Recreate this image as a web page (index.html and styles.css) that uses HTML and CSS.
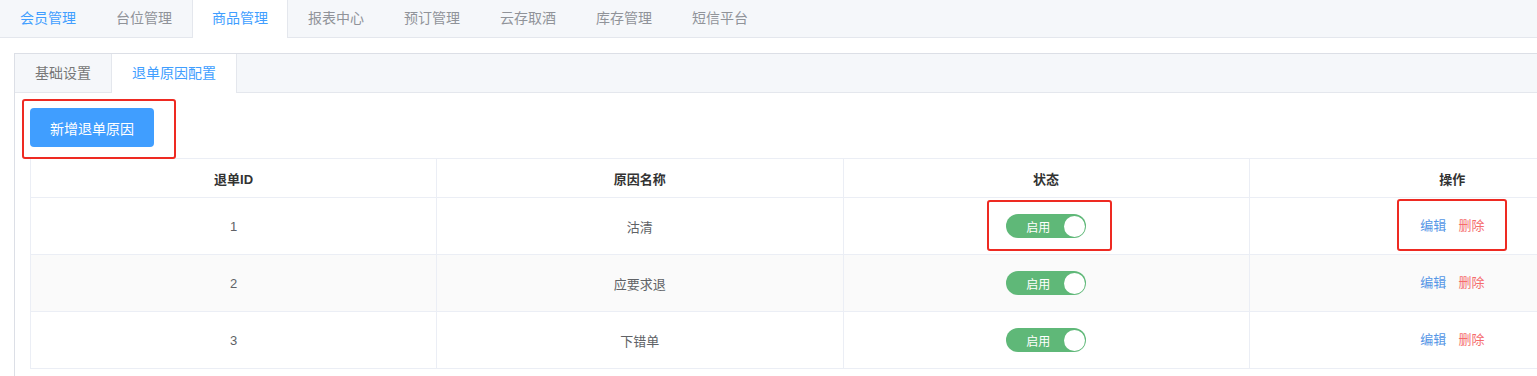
FILE: index.html
```html
<!DOCTYPE html>
<html lang="zh-CN">
<head>
  <meta charset="utf-8" />
  <title>商品管理</title>
  <link rel="stylesheet" href="styles.css">
</head>
<body>
  <!-- 顶部模块切换 -->
  <div class="top-tabs">
    <span class="top-tab link">会员管理</span>
    <span class="top-tab">台位管理</span>
    <span class="top-tab active">商品管理</span>
    <span class="top-tab">报表中心</span>
    <span class="top-tab">预订管理</span>
    <span class="top-tab">云存取酒</span>
    <span class="top-tab">库存管理</span>
    <span class="top-tab">短信平台</span>
  </div>

  <div class="panel">
    <div class="sub-tabs">
      <span class="sub-tab">基础设置</span>
      <span class="sub-tab active">退单原因配置</span>
    </div>

    <div class="panel-body">
      <div class="toolbar">
        <button class="btn-primary mark mark-btn">新增退单原因</button>
      </div>

      <table class="grid">
        <thead>
          <tr>
            <th>退单ID</th>
            <th>原因名称</th>
            <th>状态</th>
            <th>操作</th>
          </tr>
        </thead>
        <tbody>
          <tr>
            <td>1</td>
            <td>沽清</td>
            <td><span class="switch mark mark-switch"><span class="switch-text">启用</span><span class="knob"></span></span></td>
            <td><span class="actions mark mark-actions"><a class="edit">编辑</a><a class="del">删除</a></span></td>
          </tr>
          <tr>
            <td>2</td>
            <td>应要求退</td>
            <td><span class="switch"><span class="switch-text">启用</span><span class="knob"></span></span></td>
            <td><span class="actions"><a class="edit">编辑</a><a class="del">删除</a></span></td>
          </tr>
          <tr>
            <td>3</td>
            <td>下错单</td>
            <td><span class="switch"><span class="switch-text">启用</span><span class="knob"></span></span></td>
            <td><span class="actions"><a class="edit">编辑</a><a class="del">删除</a></span></td>
          </tr>
        </tbody>
      </table>
    </div>
  </div>
</body>
</html>
```

FILE: styles.css
```css
html, body {
  overflow: hidden;
}
body {
  margin: 0;
  padding: 0;
  font-family: "Liberation Sans", "Noto Sans CJK SC", sans-serif;
  font-size: 14px;
  color: #606266;
  background: #fff;
}
/* 顶部模块 tab */
.top-tabs {
  display: flex;
  height: 37px;
  background: #f5f7fa;
  border-bottom: 1px solid #e4e7ed;
}
.top-tab {
  width: 96px;
  box-sizing: border-box;
  text-align: center;
  line-height: 37px;
  color: #909399;
}
.top-tab.link {
  color: #409eff;
}
.top-tab.active {
  color: #409eff;
  background: #fff;
  border-left: 1px solid #e4e7ed;
  border-right: 1px solid #e4e7ed;
  height: 38px;
}
/* 内容面板 */
.panel {
  margin: 15px 0 0 14px;
  width: 1656px;
  border: 1px solid #dcdfe6;
  border-right: 0;
}
.sub-tabs {
  display: flex;
  height: 38px;
  background: #f5f7fa;
  border-bottom: 1px solid #e4e7ed;
}
.sub-tab {
  padding: 0 20px;
  line-height: 38px;
  color: #777;
  border-right: 1px solid #e4e7ed;
}
.sub-tab.active {
  color: #409eff;
  background: #fff;
  height: 39px;
}
.panel-body {
  padding: 15px 0 20px 15px;
}
.toolbar {
  margin-bottom: 10px;
  height: 40px;
}
.btn-primary {
  width: 124px;
  height: 39px;
  border: 0;
  border-radius: 4px;
  background: #409eff;
  color: #fff;
  font-family: inherit;
  font-size: 14px;
}
/* 表格 */
.grid {
  width: 1626px;
  border-collapse: collapse;
  table-layout: fixed;
}
.grid th,
.grid td {
  padding: 0;
  border: 1px solid #ebeef5;
  text-align: center;
  font-size: 13px;
}
.grid th {
  height: 38px;
  color: #333;
  font-weight: bold;
}
.grid td {
  height: 56px;
  color: #606266;
}
.grid tbody tr:nth-child(2) td {
  background: #fafafa;
}
/* 开关 */
.switch {
  display: inline-flex;
  align-items: center;
  width: 80px;
  height: 24px;
  box-sizing: border-box;
  border-radius: 12px;
  background: #5fb878;
  vertical-align: middle;
}
.switch-text {
  color: #fff;
  font-size: 12px;
  margin-left: 20px;
  flex: 1;
  text-align: left;
}
.knob {
  width: 21px;
  height: 21px;
  margin-right: 1px;
  border-radius: 50%;
  background: #fff;
}
/* 操作 */
.actions {
  display: inline-flex;
  gap: 12px;
  line-height: 20px;
  vertical-align: middle;
}
.edit {
  color: #5596e6;
}
.del {
  color: #f56c6c;
}
/* 红色标注框 */
.mark {
  position: relative;
}
.mark::after {
  content: "";
  position: absolute;
  border: 2px solid #ee2a22;
  border-radius: 3px;
  pointer-events: none;
}
.mark-btn::after {
  left: -8px;
  right: -22px;
  top: -9px;
  bottom: -12px;
}
.mark-switch::after {
  left: -19px;
  right: -26px;
  top: -14px;
  bottom: -13px;
}
.mark-actions::after {
  left: -23px;
  right: -23px;
  top: -17px;
  bottom: -15px;
}
```
